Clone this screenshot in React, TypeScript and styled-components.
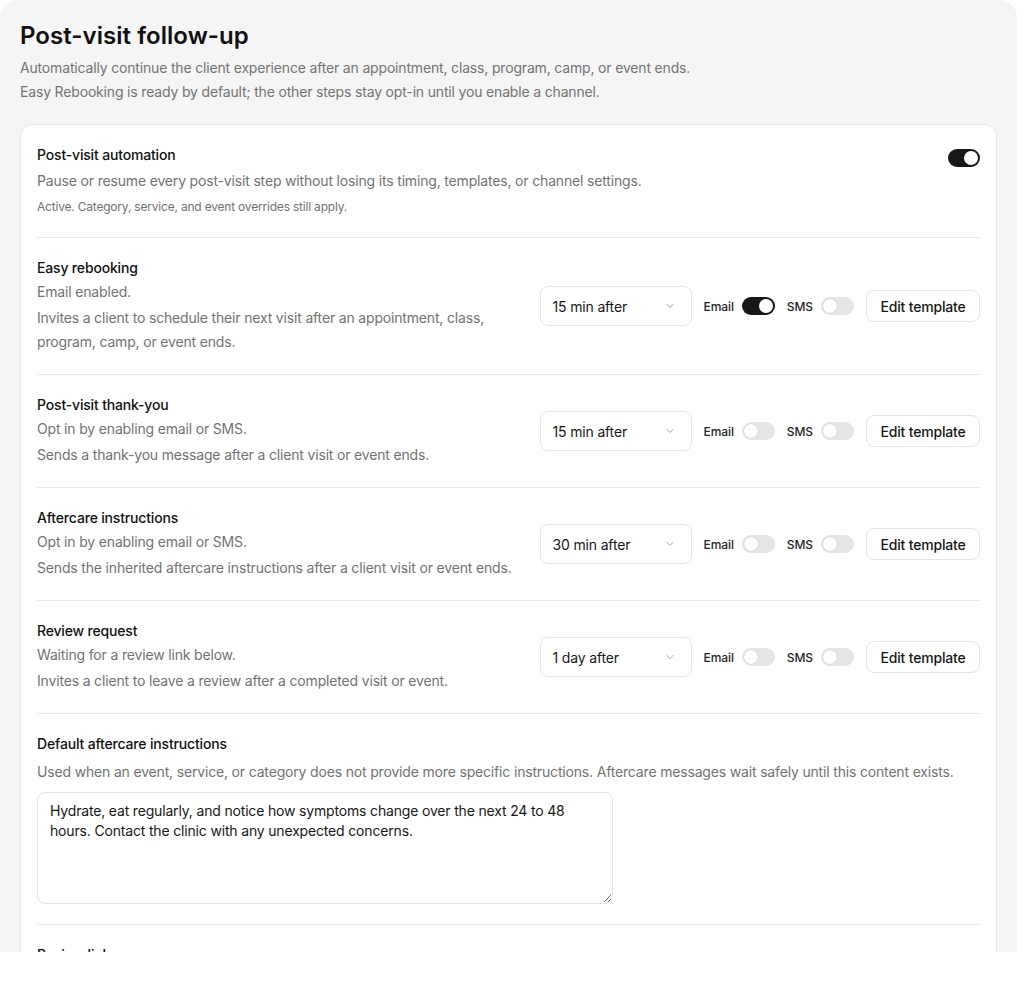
import React from "react";
import styled, { createGlobalStyle } from "styled-components";

const Global = createGlobalStyle`
  html, body { margin: 0; padding: 0; background: #ffffff; }
  body { font-family: Inter, "Noto Sans", "Liberation Sans", sans-serif; color: #171717; -webkit-font-smoothing: antialiased; letter-spacing: -0.17px; }
  * { box-sizing: border-box; }
`;

const Panel = styled.div`
  height: 952px;
  overflow: hidden;
  background: #f5f5f5;
  border-radius: 18px 18px 0 0;
  padding: 20px 20px 0 20px;
`;

const Title = styled.h1`
  margin: 0;
  font-size: 24px;
  line-height: 32px;
  font-weight: 600;
  letter-spacing: 0.05px;
  color: #111111;
`;

const Lead = styled.p`
  margin: 0;
  font-size: 14px;
  line-height: 24px;
  color: #737373;
  &:first-of-type { margin-top: 4px; }
`;

const Card = styled.section`
  margin-top: 20px;
  background: #ffffff;
  border: 1px solid #e7e7e7;
  border-radius: 12px;
  padding: 0 16px;
`;

const Row = styled.div`
  display: flex;
  align-items: center;
  gap: 20px;
  padding: 20px 0;
  border-bottom: 1px solid #e9e9e9;
`;

const TopRow = styled(Row)`
  align-items: flex-start;
`;

const Stack = styled.div`
  display: flex;
  flex-direction: column;
  padding: 20px 0;
  border-bottom: 1px solid #e9e9e9;
`;

const TextCol = styled.div`
  flex: 1;
  min-width: 0;
`;

const RowTitle = styled.div`
  font-size: 14px;
  line-height: 20px;
  font-weight: 500;
  color: #111111;
`;

const Desc = styled.div<{ $gap?: number }>`
  margin-top: ${(p) => p.$gap ?? 2}px;
  font-size: 14px;
  line-height: 24px;
  color: #737373;
`;

const Note = styled.div`
  margin-top: 4px;
  font-size: 12px;
  line-height: 20px;
  letter-spacing: -0.2px;
  color: #737373;
`;

const Controls = styled.div`
  display: flex;
  align-items: center;
  gap: 12px;
  flex-shrink: 0;
`;

const Select = styled.div`
  width: 152px;
  height: 40px;
  border: 1px solid #e5e5e5;
  border-radius: 8px;
  background: #ffffff;
  display: flex;
  align-items: center;
  justify-content: space-between;
  padding: 0 15px 0 12px;
  font-size: 14px;
  color: #171717;
`;

const ChannelGroup = styled.label`
  display: flex;
  align-items: center;
  gap: 8px;
  font-size: 12px;
  font-weight: 500;
  letter-spacing: -0.1px;
  color: #262626;
`;

const Track = styled.span<{ $on: boolean; $w: number }>`
  position: relative;
  display: inline-block;
  width: ${(p) => p.$w}px;
  height: 18px;
  border-radius: 9px;
  background: ${(p) => (p.$on ? "#171717" : "#e5e5e5")};
  flex-shrink: 0;
`;

const TopToggleWrap = styled.div`
  margin-top: 4px;
  display: flex;
`;

const Knob = styled.span<{ $on: boolean }>`
  position: absolute;
  top: 2px;
  ${(p) => (p.$on ? "right: 2px;" : "left: 2px;")}
  width: 14px;
  height: 14px;
  border-radius: 50%;
  background: #ffffff;
  box-shadow: 0 0 1px rgba(0, 0, 0, 0.25);
`;

const Button = styled.button`
  width: 114px;
  height: 32px;
  padding: 0;
  border: 1px solid #e5e5e5;
  border-radius: 8px;
  background: #ffffff;
  font-family: inherit;
  letter-spacing: inherit;
  font-size: 14px;
  font-weight: 500;
  color: #171717;
`;

const TextArea = styled.textarea`
  margin-top: 8px;
  width: 576px;
  height: 112px;
  border: 1px solid #e5e5e5;
  border-radius: 8px;
  padding: 8px 12px;
  font-family: inherit;
  letter-spacing: inherit;
  font-size: 14px;
  line-height: 20px;
  color: #171717;
  resize: vertical;
  outline: none;
`;

const Toggle = ({ on, width = 33 }: { on: boolean; width?: number }) => (
  <Track $on={on} $w={width}>
    <Knob $on={on} />
  </Track>
);

const Chevron = () => (
  <svg width="12" height="12" viewBox="0 0 24 24" fill="none" stroke="#a3a3a3" strokeWidth="2" strokeLinecap="round" strokeLinejoin="round">
    <path d="m6 9 6 6 6-6" />
  </svg>
);

type Step = {
  title: string;
  status: string;
  desc: string;
  timing: string;
  email: boolean;
  sms: boolean;
};

const steps: Step[] = [
  {
    title: "Easy rebooking",
    status: "Email enabled.",
    desc: "Invites a client to schedule their next visit after an appointment, class, program, camp, or event ends.",
    timing: "15 min after",
    email: true,
    sms: false,
  },
  {
    title: "Post-visit thank-you",
    status: "Opt in by enabling email or SMS.",
    desc: "Sends a thank-you message after a client visit or event ends.",
    timing: "15 min after",
    email: false,
    sms: false,
  },
  {
    title: "Aftercare instructions",
    status: "Opt in by enabling email or SMS.",
    desc: "Sends the inherited aftercare instructions after a client visit or event ends.",
    timing: "30 min after",
    email: false,
    sms: false,
  },
  {
    title: "Review request",
    status: "Waiting for a review link below.",
    desc: "Invites a client to leave a review after a completed visit or event.",
    timing: "1 day after",
    email: false,
    sms: false,
  },
];

export default function App() {
  return (
    <>
      <Global />
      <Panel>
        <Title>Post-visit follow-up</Title>
        <Lead>Automatically continue the client experience after an appointment, class, program, camp, or event ends.</Lead>
        <Lead>Easy Rebooking is ready by default; the other steps stay opt-in until you enable a channel.</Lead>
        <Card>
          <TopRow>
            <TextCol>
              <RowTitle>Post-visit automation</RowTitle>
              <Desc $gap={4}>Pause or resume every post-visit step without losing its timing, templates, or channel settings.</Desc>
              <Note>Active. Category, service, and event overrides still apply.</Note>
            </TextCol>
            <TopToggleWrap>
              <Toggle on width={32} />
            </TopToggleWrap>
          </TopRow>
          {steps.map((s) => (
            <Row key={s.title}>
              <TextCol>
                <RowTitle>{s.title}</RowTitle>
                <Desc>{s.status}</Desc>
                <Desc>{s.desc}</Desc>
              </TextCol>
              <Controls>
                <Select>
                  <span>{s.timing}</span>
                  <Chevron />
                </Select>
                <ChannelGroup>
                  Email
                  <Toggle on={s.email} />
                </ChannelGroup>
                <ChannelGroup>
                  SMS
                  <Toggle on={s.sms} />
                </ChannelGroup>
                <Button>Edit template</Button>
              </Controls>
            </Row>
          ))}
          <Stack>
            <RowTitle>Default aftercare instructions</RowTitle>
            <Desc $gap={6}>Used when an event, service, or category does not provide more specific instructions. Aftercare messages wait safely until this content exists.</Desc>
            <TextArea defaultValue="Hydrate, eat regularly, and notice how symptoms change over the next 24 to 48 hours. Contact the clinic with any unexpected concerns." />
          </Stack>
          <Stack>
            <RowTitle>Review link</RowTitle>
            <Desc>Paste the link clients should use to leave a review.</Desc>
          </Stack>
        </Card>
      </Panel>
    </>
  );
}
